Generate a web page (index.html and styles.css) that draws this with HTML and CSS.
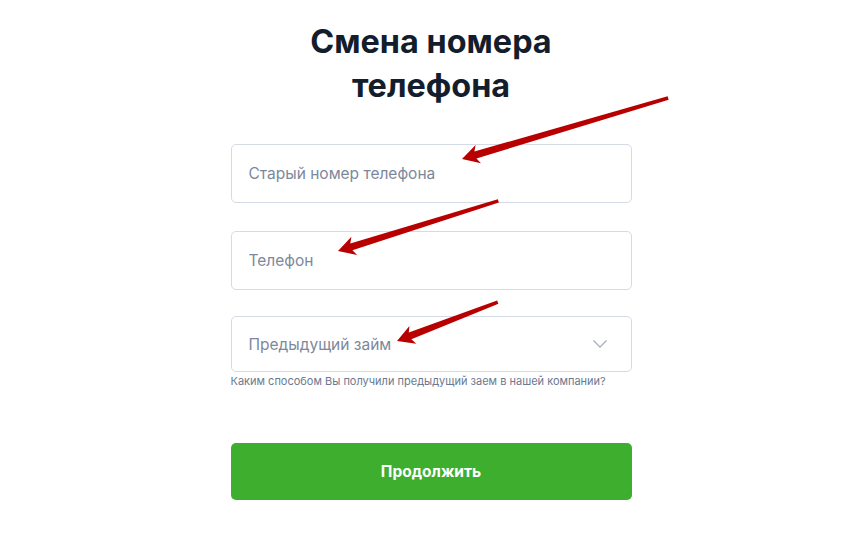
FILE: index.html
```html
<!DOCTYPE html>
<html lang="ru">
<head>
    <meta charset="UTF-8">
    <meta name="viewport" content="width=device-width, initial-scale=1.0">
    <title>Смена номера телефона</title>
    <link rel="stylesheet" href="styles.css">
</head>
<body>

<div class="page">
    <div class="container">
        <h1>Смена номера<br>телефона</h1>

        <form class="form">
            <div class="field field-tall">
                <input type="text" placeholder="Старый номер телефона">
            </div>
            <div class="field field-tall">
                <input type="tel" placeholder="Телефон">
            </div>
            <div class="field field-select">
                <div class="select">
                    <span class="select-placeholder">Предыдущий займ</span>
                    <svg class="chevron" width="16" height="10" viewBox="0 0 16 10">
                        <path d="M1.5 1.5 L8 8 L14.5 1.5" fill="none" stroke="#a9b1bd" stroke-width="1.3"/>
                    </svg>
                </div>
                <p class="hint">Каким способом Вы получили предыдущий заем в нашей компании?</p>
            </div>

            <button type="button" class="submit">Продолжить</button>
        </form>
    </div>

    <!-- annotation arrows -->
    <svg class="arrows" width="845" height="547" viewBox="0 0 845 547">
        <g fill="#b80000">
            <polygon transform="translate(462 159) rotate(-16.5)" points="0,0 17,-9.5 14,-3.6 215,-1.8 215,1.8 14,3.6 17,9.5"/>
            <polygon transform="translate(338 251) rotate(-17.35)" points="0,0 17,-9.5 14,-3.6 168,-1.8 168,1.8 14,3.6 17,9.5"/>
            <polygon transform="translate(397 341) rotate(-21.1)" points="0,0 17,-9.5 14,-3.6 108,-1.8 108,1.8 14,3.6 17,9.5"/>
        </g>
    </svg>
</div>

</body>
</html>
```

FILE: styles.css
```css
body {
    font-family: Inter, "Noto Sans", Arial, sans-serif;
    background-color: #fff;
    margin: 0;
}
.page {
    position: relative;
    min-height: 547px;
    padding-left: 17px;
}
.container {
    width: 401px;
    margin: 0 auto;
    padding-top: 20px;
}
h1 {
    margin: 0;
    text-align: center;
    font-size: 32.4px;
    line-height: 44px;
    font-weight: 700;
    color: #131d2b;
}
.form {
    margin-top: 36px;
    display: flex;
    flex-direction: column;
}
.field-tall {
    margin-bottom: 28px;
}
.field-tall:nth-child(2) {
    margin-bottom: 26px;
}
.field input {
    box-sizing: border-box;
    width: 100%;
    height: 59px;
    padding: 0 17px;
    border: 1px solid #d5dbe5;
    border-radius: 5px;
    font-family: inherit;
    font-size: 15.5px;
    color: #1f2937;
    outline: none;
}
.field input::placeholder {
    color: #7d889b;
}
.select {
    box-sizing: border-box;
    height: 56px;
    padding: 0 23px 0 17px;
    border: 1px solid #d5dbe5;
    border-radius: 5px;
    display: flex;
    align-items: center;
    justify-content: space-between;
}
.select-placeholder {
    font-size: 15.5px;
    color: #7d889b;
}
.hint {
    margin: 2px 0 0;
    font-size: 11px;
    line-height: 14px;
    color: #6b7890;
}
.submit {
    margin-top: 55px;
    height: 57px;
    border: none;
    border-radius: 5px;
    background-color: #3dae2d;
    color: #fff;
    font-family: inherit;
    font-size: 15.5px;
    font-weight: 700;
    cursor: pointer;
}
.arrows {
    position: absolute;
    left: 0;
    top: 0;
    pointer-events: none;
}
```
